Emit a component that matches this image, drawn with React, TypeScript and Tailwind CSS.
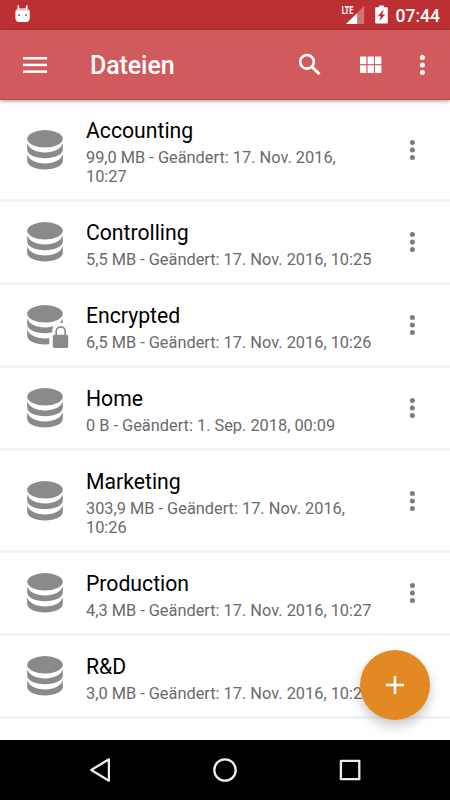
import React from 'react';

type FileItem = {
  name: string;
  info: string;
  locked?: boolean;
};

const files: FileItem[] = [
  { name: 'Accounting', info: '99,0 MB - Geändert: 17. Nov. 2016, 10:27' },
  { name: 'Controlling', info: '5,5 MB - Geändert: 17. Nov. 2016, 10:25' },
  { name: 'Encrypted', info: '6,5 MB - Geändert: 17. Nov. 2016, 10:26', locked: true },
  { name: 'Home', info: '0 B - Geändert: 1. Sep. 2018, 00:09' },
  { name: 'Marketing', info: '303,9 MB - Geändert: 17. Nov. 2016, 10:26' },
  { name: 'Production', info: '4,3 MB - Geändert: 17. Nov. 2016, 10:27' },
  { name: 'R&D', info: '3,0 MB - Geändert: 17. Nov. 2016, 10:27' }
];

const DatabaseIcon = ({ locked }: { locked?: boolean }) => (
  <svg className="w-[42px] h-[44px] shrink-0 overflow-visible" viewBox="0 0 42 44" fill="#8a8a8a">
    <ellipse cx="18" cy="10.8" rx="17.8" ry="8.7" />
    <path d="M.2 15.2C2.2 21.2 9 24.4 18 24.4S33.8 21.2 35.8 15.2V21.5C35.8 26.6 28 30.2 18 30.2S.2 26.6 .2 21.5Z" />
    <path d="M.2 26.2C2.2 32.2 9 35.4 18 35.4S33.8 32.2 35.8 26.2V32.7C35.8 37.8 28 41.4 18 41.4S.2 37.8 .2 32.7Z" />
    {locked && <>
      {/* white cut-out behind the lock */}
      <path d="M22.3 44V32.5C22.3 30.5 23.5 29.4 25.3 29.2V27.5C25.5 23 29 19.8 33.6 19.8C35.2 19.8 36.6 20.2 38 21L42 27V45Z" fill="#fff" />
      <path d="M29.2 32.5V28.3a4.5 4.5 0 0 1 9 0V32.5" fill="none" stroke="#8a8a8a" strokeWidth="1.7" />
      <rect x="25.8" y="31.8" width="15.4" height="13.2" rx="1.7" />
    </>}
  </svg>
);

const MoreIcon = ({ className }: { className?: string }) => (
  <svg className={className} viewBox="0 0 6 22" fill="currentColor">
    <circle cx="3.4" cy="3.5" r="2.5" />
    <circle cx="3.4" cy="11" r="2.5" />
    <circle cx="3.4" cy="18.5" r="2.5" />
  </svg>
);

const StatusBar = () => (
  <div className="h-[30px] shrink-0 flex items-center bg-[#bc3033] text-white">
    <svg className="ml-[15px] mb-[2px] w-[16px] h-[18px]" viewBox="0 0 16 18" fill="#fff">
      <path d="M2.6 .3L3.7 0L4.5 3.4H10.5L11.3 0L12.4 .3L12.6 4Q14.8 4.6 14.8 7V13.6Q14.6 16.6 12 17.1H3.2Q.6 16.6 .4 13.6V7Q.4 4.6 2.4 4Z" />
      <path d="M2.4 3.9H12.7L13.6 5.8H1.5Z" fill="#f2c3c5" />
      <rect x="3" y="9" width="2" height="2" fill="#d67376" />
      <rect x="10" y="9" width="2" height="2" fill="#d67376" />
    </svg>
    <div className="ml-auto flex items-center h-full">
      <svg className="w-[25px] h-[20px]" viewBox="0 0 25 20">
        <path d="M23.2 .8V19H16.2V8Z" fill="#d37174" />
        <path d="M16.2 8V19H5Z" fill="#fff" />
        <text x=".8" y="9" fontSize="11" fontWeight="800" fontFamily="Roboto, sans-serif" textLength="11.4" lengthAdjust="spacingAndGlyphs" fill="#fff">LTE</text>
      </svg>
      <svg className="ml-[9px] mb-px w-[13px] h-[19px]" viewBox="0 0 13 19">
        <path d="M1 2.2H4V.5H9V2.2H12Q12.8 2.2 12.8 3V17.5Q12.8 18.5 12 18.5H1Q.2 18.5 .2 17.5V3Q.2 2.2 1 2.2Z" fill="#fff" />
        <path d="M8.6 4.6L2.8 11.2H5.8L4.2 16L10.4 9.4H7.2Z" fill="#bc3033" />
      </svg>
      <span className="ml-[8px] w-[54.5px] pt-px text-[17.5px] leading-[20px] font-medium">07:44</span>
    </div>
  </div>
);

const AppBar = () => (
  <header className="relative z-10 h-[70px] shrink-0 flex items-center bg-[#d15a5c] border-b border-[#c24548] text-white shadow-[0_1px_4px_rgba(0,0,0,0.4)]">
    <svg className="ml-[23px] w-[24px] h-[18px]" viewBox="0 0 24 18" fill="#fff">
      <rect y="1" width="24" height="2.5" />
      <rect y="7.7" width="24" height="2.5" />
      <rect y="14.4" width="24" height="2.5" />
    </svg>
    <h1 className="ml-[43px] pt-[3px] text-[25px] leading-[30px] tracking-[-0.1px] font-medium">Dateien</h1>
    <div className="ml-auto flex items-center">
      <svg className="w-[23px] h-[23px]" viewBox="0 0 23 23" fill="none" stroke="#fff">
        <circle cx="8" cy="8.8" r="6.8" strokeWidth="2.6" />
        <path d="M12.8 13.6L20.5 21.3" strokeWidth="3" />
      </svg>
      <svg className="ml-[38px] w-[22px] h-[18px]" viewBox="0 0 22 18" fill="#fff">
        <rect x="0" y=".5" width="6.4" height="7.6" />
        <rect x="7.6" y=".5" width="6.4" height="7.6" />
        <rect x="15" y=".5" width="6.4" height="7.6" />
        <rect x="0" y="9.3" width="6.4" height="7.6" />
        <rect x="7.6" y="9.3" width="6.4" height="7.6" />
        <rect x="15" y="9.3" width="6.4" height="7.6" />
      </svg>
      <MoreIcon className="ml-[37px] mr-[25px] w-[6px] h-[22px]" />
    </div>
  </header>
);

const FileRow = ({ file }: { file: FileItem }) => (
  <li className="flex items-center pl-[27px] pr-[35px] border-b-[3px] border-[#f3f3f3]">
    <DatabaseIcon locked={file.locked} />
    <div className="ml-[17px] w-[289px] pt-[18px] pb-[13px]">
      <p className="text-[21.2px] leading-[26px] text-black">{file.name}</p>
      <p className="mt-[4px] text-[16.35px] leading-[19px] text-[#6a6a6a]">{file.info}</p>
    </div>
    <MoreIcon className="ml-auto w-[6px] h-[22px] text-[#7c7c7c]" />
  </li>
);

const NavigationBar = () => (
  <nav className="h-[60px] shrink-0 flex items-center justify-center gap-[97px] bg-black">
    <svg className="w-[28px] h-[28px]" viewBox="0 0 28 28" fill="none" stroke="#eee" strokeWidth="2.2" strokeLinejoin="round">
      <path d="M22.9 3.3V24.7L5.2 14Z" />
    </svg>
    <svg className="w-[28px] h-[28px]" viewBox="0 0 28 28" fill="none" stroke="#eee" strokeWidth="2.3">
      <circle cx="14" cy="14" r="10.7" />
    </svg>
    <svg className="w-[28px] h-[28px]" viewBox="0 0 28 28" fill="none" stroke="#eee" strokeWidth="2.3" strokeLinejoin="round">
      <rect x="4.9" y="4.8" width="18.4" height="18.4" />
    </svg>
  </nav>
);

const App = () => {
  return <div className="w-[450px] h-[800px] flex flex-col overflow-hidden bg-white font-['Roboto',sans-serif]">
    <StatusBar />
    <AppBar />
    <main className="relative flex-1 min-h-0">
      <ul>
        {files.map(file => <FileRow key={file.name} file={file} />)}
      </ul>
      {/* Floating add button */}
      <button aria-label="Hinzufügen" className="absolute right-[20px] bottom-[20px] w-[70px] h-[70px] rounded-full bg-[#e38924] flex items-center justify-center shadow-[0_6px_12px_rgba(0,0,0,0.22)]">
        <svg className="w-[18px] h-[18px]" viewBox="0 0 18 18" stroke="#fff" strokeWidth="2.5">
          <path d="M9 0V18M0 9H18" />
        </svg>
      </button>
    </main>
    <NavigationBar />
  </div>;
};
export default App;
